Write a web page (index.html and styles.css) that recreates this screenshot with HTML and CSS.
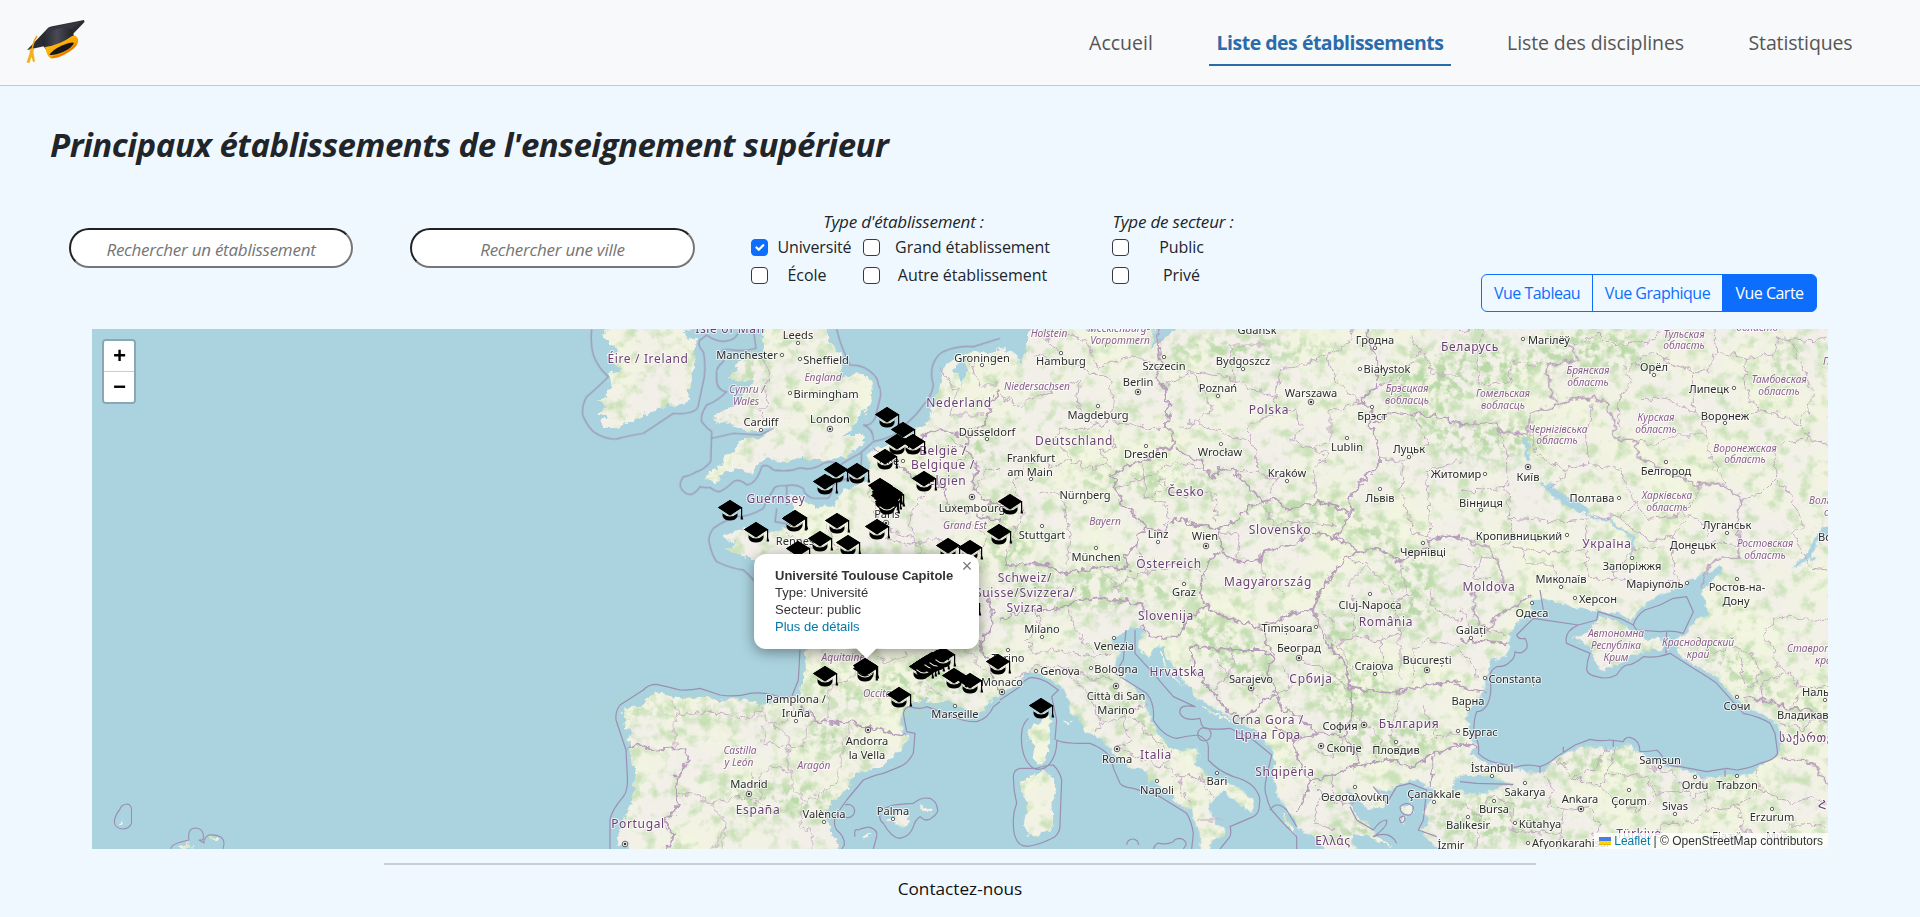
FILE: index.html
```html
<!DOCTYPE html>
<html lang="fr">
<head>
<meta charset="utf-8">
<title>Liste des établissements</title>
<link rel="stylesheet" href="styles.css">
</head>
<body>
<header class="topbar">
  <svg class="logo" viewBox="0 0 100 80" width="100" height="80" aria-label="Logo">
    <defs>
      <linearGradient id="cloth" x1="0" y1="0" x2="1" y2="0"><stop offset="0" stop-color="#22222a"/><stop offset=".45" stop-color="#4a4a55"/><stop offset="1" stop-color="#1d1d25"/></linearGradient>
      <linearGradient id="gold" x1="0" y1="0" x2="1" y2="1"><stop offset="0" stop-color="#ffc91f"/><stop offset=".55" stop-color="#f9a800"/><stop offset="1" stop-color="#e06c00"/></linearGradient>
    </defs>
    <path d="M17 45 L37 24 Q38 22 41 21.500 L74 15 L74.500 17 L63 29 L35 41Z" fill="#2b2b34"/>
    <path d="M38 23 L72 16 L60 25 L34 33Z" fill="#363640"/>
    <path d="M32 39 L35 31 Q46 20 62 24 L65 35 Q52 40 37 46Z" fill="url(#cloth)"/>
    <path d="M35 42 Q50 40 62 31 Q66 29 68 34 Q70 40 59 47 Q48 54 41 53.500 Q37 52 35 42Z" fill="url(#gold)"/>
    <path d="M39.500 50 Q42 45 52 40.500 Q62 36.500 64 38 Q62 43 53 47 Q45 50.500 39.500 50Z" fill="#17171b"/>
    <path d="M42 52.300 Q54 51 66 40" stroke="#e97900" stroke-width="1.500" fill="none"/>
    <path d="M27 31 Q23 37 22 45" stroke="#eaa51b" stroke-width="1.500" fill="none"/>
    <path d="M20 42 h4 l-.5 4 l1.500 9 l-2 .5 l-1.500-5 l-2 6 l-3-.5 l3-9Z" fill="#f2b223" transform="translate(0 1.500)"/>
  </svg>
  <nav class="menu">
    <a class="link l1">Accueil</a>
    <a class="link l2 active">Liste des établissements</a>
    <a class="link l3">Liste des disciplines</a>
    <a class="link l4">Statistiques</a>
  </nav>
</header>
<main>
  <h1 class="title">Principaux établissements de l'enseignement supérieur</h1>
  <section class="filters">
    <input class="search" type="text" placeholder="Rechercher un établissement">
    <input class="search" type="text" placeholder="Rechercher une ville">
    <div class="types">
      <p class="legend">Type d'établissement :</p>
      <div class="row">
        <span class="box checked"><svg viewBox="0 0 20 20" width="15" height="15"><path d="M6 10l3 3 6-6" fill="none" stroke="#fff" stroke-width="3" stroke-linecap="round" stroke-linejoin="round"/></svg></span><span class="name a wide">Université</span>
        <span class="box"></span><span class="name b">Grand établissement</span>
      </div>
      <div class="row">
        <span class="box"></span><span class="name a">École</span>
        <span class="box"></span><span class="name b">Autre établissement</span>
      </div>
    </div>
    <div class="sector">
      <p class="legend">Type de secteur :</p>
      <div class="row"><span class="box"></span><span class="name c">Public</span></div>
      <div class="row"><span class="box"></span><span class="name c">Privé</span></div>
    </div>
    <div class="views">
      <button class="view v1">Vue Tableau</button><button class="view v2">Vue Graphique</button><button class="view v3 on">Vue Carte</button>
    </div>
  </section>
  <section class="map">
    <svg class="tiles" viewBox="92 329 1736 520" width="1736" height="520">
      <defs>
        <filter id="terrain" filterUnits="userSpaceOnUse" x="92" y="329" width="1736" height="520" color-interpolation-filters="sRGB">
          <feTurbulence type="fractalNoise" baseFrequency=".14" numOctaves="3" seed="4" result="w"/>
          <feDisplacementMap in="SourceGraphic" in2="w" scale="9" xChannelSelector="R" yChannelSelector="G" result="land"/>
          <feTurbulence type="fractalNoise" baseFrequency=".07" numOctaves="6" seed="11"/>
          <feColorMatrix values="0 0 0 0 .8  0 0 0 0 .885  0 0 0 0 .73  3.500 0 0 0 -1.750" result="g"/>
          <feTurbulence type="fractalNoise" baseFrequency=".014" numOctaves="3" seed="7"/>
          <feColorMatrix values="0 0 0 0 .95  0 0 0 0 .96  0 0 0 0 .875  0 3 0 0 -1.100" result="y"/>
          <feMerge result="m"><feMergeNode in="land"/><feMergeNode in="y"/><feMergeNode in="g"/></feMerge>
          <feComposite in="m" in2="land" operator="in"/>
        </filter>
        <filter id="forest" filterUnits="userSpaceOnUse" x="92" y="329" width="1736" height="520" color-interpolation-filters="sRGB">
          <feGaussianBlur in="SourceAlpha" stdDeviation="9" result="b"/>
          <feTurbulence type="fractalNoise" baseFrequency=".11" numOctaves="5" seed="3"/>
          <feColorMatrix values="0 0 0 0 .73  0 0 0 0 .85  0 0 0 0 .66  5 0 0 0 -2.300"/>
          <feComposite in2="b" operator="in"/>
        </filter>
        <filter id="jag" filterUnits="userSpaceOnUse" x="92" y="329" width="1736" height="520">
          <feTurbulence type="fractalNoise" baseFrequency=".13" numOctaves="2" seed="8" result="n"/>
          <feDisplacementMap in="SourceGraphic" in2="n" scale="11" xChannelSelector="R" yChannelSelector="G"/>
        </filter>
        <filter id="shore" filterUnits="userSpaceOnUse" x="92" y="329" width="1736" height="520">
          <feTurbulence type="fractalNoise" baseFrequency=".14" numOctaves="3" seed="4" result="n"/>
          <feDisplacementMap in="SourceGraphic" in2="n" scale="8" xChannelSelector="R" yChannelSelector="G"/>
        </filter>
        <g id="cap"><path d="M-12 7.500L0 0l12 7.500-12 8z"/><path d="M-7.500 12.500q7.500 6 15 0v3.500q-1.500 4.500-7.500 4.500t-7.500-4.500z"/><path d="M-7.500 12.700q7.500 6.600 15 0" fill="none" stroke="#e9efdf" stroke-width="1.100"/><path d="M-12 7.500L0 0l12 7.500-12 7.800z"/><path d="M11 7h1.200v8.500l1 4h-2.600l.4-4z"/></g>
      </defs>

      <!-- mainland and islands -->
      <g class="land" filter="url(#terrain)">
        <g transform="translate(540 325) scale(.33333)">
          <path d="M188 -20L190 30 210 55 240 75 200 90 215 110 250 130 205 150 210 170 200 200 205 215 170 232 200 245 168 270 205 272 180 290 190 308 235 310 290 280 330 265 380 245 440 235 445 215 450 180 465 120 462 70 465 45 430 25 395 -20Z"/>
          <path d="M680 -20L668 40 668 90 685 110 640 95 600 100 585 120 590 140 560 160 600 170 640 165 625 190 600 230 580 245 520 265 540 275 515 275 525 290 560 290 580 300 620 320 660 318 700 300 670 335 650 345 600 345 590 370 560 390 555 410 520 435 488 465 510 460 525 475 560 440 610 430 635 450 660 405 720 410 765 400 850 410 925 390 975 355 970 330 910 330 950 300 960 280 995 230 998 180 985 155 950 148 910 160 895 155 905 130 905 90 870 60 860 -20Z"/>
          <path d="M1440 50L1330 90 1280 80 1240 100 1210 130 1195 200 1180 250 1160 300 1130 310 1090 340 1000 370 985 385 990 450 985 470 920 490 890 515 885 545 830 545 795 530 790 515 760 510 745 505 760 540 775 575 770 590 740 610 700 620 650 610 600 610 555 630 560 650 590 650 555 670 590 690 640 700 700 740 750 790 780 860 1440 860Z"/>
          <path d="M405 -5L450 -20 455 10 425 24Z"/>
        </g>
        <g transform="translate(540 590) scale(.33333)">
          <path d="M780 -50L800 175 792 210 795 240 785 290 782 315 740 325 700 335 660 345 600 325 540 330 480 320 430 325 395 322 370 310 345 306 315 325 310 345 280 350 250 355 245 375 260 390 258 410 275 430 265 450 270 480 275 500 288 550 280 590 270 640 250 700 240 720 232 765 245 765 265 755 270 820 890 820 895 760 875 740 870 700 855 690 870 650 905 610 930 590 925 575 950 550 1020 535 1085 480 1105 440 1085 420 1085 370 1110 345 1150 325 1190 340 1220 335 1260 350 1300 365 1330 360 1345 335 1440 300 1440 -50Z"/>
          <path d="M1035 692L1080 665 1112 680 1105 700 1085 714 1070 698ZM1138 645L1178 658 1170 668 1145 658ZM960 745L992 728 985 745 970 754Z"/>
        </g>
        <path d="M1000 300H1860V880H1000Z"/>
        <path d="M122 820l3 2-1 4-3-1zM178 845l10-2 6 4-12 3zM208 836h9l1 3h-8z"/>
      </g>

      <g filter="url(#forest)">
        <ellipse cx="1490" cy="440" rx="65" ry="22"/><ellipse cx="1470" cy="370" rx="70" ry="30"/><ellipse cx="1590" cy="350" rx="60" ry="24"/>
        <ellipse cx="1420" cy="390" rx="40" ry="40"/><ellipse cx="1080" cy="590" rx="80" ry="22"/><ellipse cx="1150" cy="590" rx="60" ry="14"/><ellipse cx="1290" cy="510" rx="60" ry="15"/>
        <ellipse cx="1370" cy="535" rx="55" ry="15" transform="rotate(40 1370 535)"/><ellipse cx="1410" cy="590" rx="30" ry="45"/><ellipse cx="1340" cy="630" rx="25" ry="20"/>
        <ellipse cx="1230" cy="650" rx="60" ry="24" transform="rotate(35 1230 650)"/><ellipse cx="1350" cy="690" rx="40" ry="30"/><ellipse cx="1390" cy="740" rx="60" ry="18"/>
        <ellipse cx="1120" cy="700" rx="60" ry="14" transform="rotate(40 1120 700)"/><ellipse cx="1740" cy="670" rx="55" ry="16" transform="rotate(35 1740 670)"/><ellipse cx="1810" cy="715" rx="40" ry="12"/>
        <ellipse cx="1600" cy="762" rx="70" ry="12"/><ellipse cx="1700" cy="790" rx="90" ry="9"/><ellipse cx="1490" cy="820" rx="60" ry="26"/><ellipse cx="1150" cy="480" rx="90" ry="12"/>
        <ellipse cx="1785" cy="360" rx="12" ry="40" transform="rotate(20 1785 360)"/><ellipse cx="1245" cy="350" rx="90" ry="14"/><ellipse cx="880" cy="700" rx="60" ry="12"/><ellipse cx="930" cy="680" rx="55" ry="18"/>
        <ellipse cx="828" cy="680" rx="20" ry="20"/><ellipse cx="700" cy="712" rx="90" ry="8"/><ellipse cx="830" cy="740" rx="30" ry="18"/><ellipse cx="1010" cy="540" rx="20" ry="50"/><ellipse cx="755" cy="370" rx="12" ry="26"/><ellipse cx="790" cy="345" rx="12" ry="14"/><ellipse cx="980" cy="450" rx="18" ry="24"/>
        <ellipse cx="1355" cy="830" rx="20" ry="20"/><ellipse cx="780" cy="800" rx="60" ry="20"/>
      </g>

      <!-- seas and lakes over the eastern mainland -->
      <g class="water" filter="url(#shore)">
        <path d="M1000 315h42l-15 20v15l-5 15-6-12-16-5zM1080 315h30l-8 14-14 5zM1155 315h32l-18 20-11 6-6 10zM953 370l10-14 5 14-7 16-4-12z"/>
        <g transform="translate(1000 590) scale(.33333)">
          <path d="M-20 330L40 290 75 255 100 245 125 250 160 280 190 290 205 330 210 370 235 385 240 400 255 430 290 435 320 465 350 500 390 530 440 540 445 580 470 580 500 600 520 630 550 650 575 660 585 690 600 730 600 820 -20 820Z"/>
          <path d="M625 820L635 750 670 740 668 710 630 680 628 650 650 615 670 605 690 620 715 635 735 660 755 665 762 635 740 610 700 585 640 570 580 520 600 490 590 475 520 480 490 450 450 390 440 340 400 290 350 240 345 210 360 190 340 170 340 145 380 120 410 110 435 115 425 135 410 150 425 185 445 205 470 160 490 170 500 200 530 240 560 290 600 330 690 380 760 420 820 480 825 520 815 560 830 610 870 670 900 720 950 745 990 820Z"/>
          <path d="M1035 600L1060 640 1060 665 1100 700 1130 740 1090 740 1050 730 1090 820 1400 820 1300 760 1255 720 1290 700 1270 670 1285 640 1310 605 1290 590 1250 570 1190 585 1170 605 1120 590 1150 620 1165 645 1110 655 1080 640 1060 610Z"/>
        </g>
        <g transform="translate(1460 590) scale(.33333)">
          <path d="M145 165L150 130 190 80 220 60 215 35 245 25 300 40 370 60 415 65 480 70 515 90 540 55 590 20 640 0 690 -30 780 -70 790 -62 740 -10 725 0 735 45 750 75 720 80 690 110 680 135 650 140 640 170 665 200 720 240 770 260 830 330 870 360 920 380 950 400 965 440 965 480 950 500 900 530 860 560 800 555 740 565 690 545 650 530 600 525 560 500 530 485 510 460 480 475 440 480 400 470 340 480 290 500 250 545 210 548 160 535 110 530 60 510 30 490 50 470 30 440 20 380 40 340 70 310 80 260 90 210 140 200Z"/>
          <path d="M-20 565L60 550 110 570 165 583 120 590 80 610 40 610 -20 600Z"/>
        </g>
        <g transform="translate(1460 325) scale(.33333)">
          <path d="M190 340h14l4 60-12 12zM240 478l34-2 46 40 60 28 8 26-60-18-42-32zM1060 645l30-40 24-8v30l-45 30-12 46-60 24 40-40z"/>
          <path d="M385 570L450 590 520 640 515 690" class="river"/>
        </g>
      </g>
      <g class="land" filter="url(#terrain)">
        <g transform="translate(1000 590) scale(.33333)">
          <path d="M85 420L110 400 140 375 150 390 148 430 150 460 140 500 125 525 95 505 100 470 85 450ZM60 575L95 560 130 540 150 550 160 580 168 610 158 640 160 690 155 725 125 725 105 745 80 735 75 700 80 660 75 620 60 600ZM1200 655L1235 642 1240 670 1210 675ZM1080 725L1140 745 1180 765 1140 760ZM1200 685h14v16h-14zM1090 650l60-4-20 12zM850 670l40 60-12-2-36-50zM600 345l60 30 80 30-50-12-80-34zM480 180l20 40 50 70-34-30-36-60zM190 392h24v8h-24z"/>
        </g>
        <g transform="translate(1460 590) scale(.33333)"><path d="M335 150L400 110 420 80 470 90 520 125 560 150 605 145 618 160 600 180 540 185 500 210 460 230 425 245 405 215 400 185 380 165Z"/></g>
      </g>

      <!-- regional borders -->
      <g class="region" filter="url(#jag)">
        <path transform="translate(540 325) scale(.33333)" d="M665 100L690 150 670 190 680 240 660 260 690 300M1200 130L1250 200 1230 270 1330 270M1290 100L1320 180 1370 180M980 480L1010 560 1000 600 1120 640 1110 560 1160 500 1150 450M860 600L900 680M740 620L820 680M1040 640L1100 660 1200 640 1240 680M1120 640L1140 700M1300 500L1340 440 1380 430M1230 340L1290 380 1240 420M1300 600L1340 640 1320 690"/>
        <path transform="translate(540 590) scale(.33333)" d="M395 325L410 370 400 420 410 470M410 380L470 370 560 370 600 390 660 370 670 350M660 370L690 400 730 400 770 340M670 410L670 460 740 470 790 470 800 410 830 390M690 400L750 440 740 500 750 540 760 590 800 640 860 600 890 580 900 520 930 400M660 640L660 550 700 530 750 545M660 640L620 600 640 550M415 620L460 610 510 640 600 620 660 640M510 640L560 700 545 777M790 640L780 700 820 740 810 777M860 390L870 290 940 260 980 210M1010 200L1040 220 1100 190M1110 210L1130 260 1200 320M1230 150L1280 180 1330 240M560 700L520 777M790 470L770 460"/>
        <path transform="translate(1000 325) scale(.33333)" d="M130 12L150 60 185 85M185 20L260 50 290 130 400 90 470 120M270 140L330 160 340 230 330 290 250 310 180 310 160 350 210 400 260 430 330 420M100 90L230 120 290 150M0 210L60 250 90 220 180 190 240 160M240 160L230 250 280 300M340 290L440 310 500 310M330 320L350 370 300 380 330 420M210 400L170 430 120 400 60 440 40 480 75 560 60 580 15 700M120 510L180 500 200 580 210 640 200 720M580 140L590 180 640 250 590 290 530 310M500 180L580 140 700 160 690 60 800 60M690 160L780 200 820 210 850 130 910 120 980 90 1050 50 1060 12M980 90L1010 170 1080 230M820 210L830 250 890 260 900 320 870 350 940 370 990 350 990 260 1080 230M590 290L680 330 740 350 750 300 830 260M740 350L770 370 770 440 700 440M940 370L990 390 940 430 950 520M770 440L830 460 900 440M830 460L810 500M350 490L430 460 420 410M440 520L430 460 520 410 600 430M440 520L500 490 550 510 640 500 650 590M470 470l30-12 0 20-25 4zM500 600L500 540 440 520M660 620L720 630 710 700M790 530L820 600 900 590 1010 600M900 590L890 640M1140 180L1200 160 1260 80 1230 30M1270 80L1300 150 1380 150M1140 400L1210 410 1280 360 1250 280M1210 410L1200 500 1240 620 1290 640M1290 640L1280 440 1380 410M1040 700L1100 720 1140 760 1180 810M1200 710L1220 810M1100 720L1040 780M780 680L790 760 850 810M410 660L440 740 350 780 300 730M440 740L530 720 600 740M350 780L360 810"/>
        <path transform="translate(1000 590) scale(.33333)" d="M80 150L110 190 180 180 270 200 340 190M110 60L120 120 80 150M200 50L230 130 280 190M40 270L110 230 190 230 290 270 340 260M200 250L280 330 300 400 370 380 440 340M300 400L290 440M370 380L390 450 350 470 400 490 440 530M400 380L450 440 500 470M390 490L480 530 500 520 520 480M500 530L540 560 550 610 570 640M520 560L600 560 640 620M590 690L660 690M960 120L1010 160 1060 140 1060 20M1010 160L1060 240M1060 140L1140 150 1150 260M1140 150L1200 130 1200 270M1200 130L1180 40 1250 0M1240 180L1290 150 1380 170M1240 180L1240 280M960 60L1010 100M1290 0L1300 60 1380 90M850 230L880 290 830 310M900 210L980 240 1040 290M1070 380L1140 440 1120 510M1200 330L1170 440 1230 500M1270 340L1310 440 1380 430M940 580L1000 640 1060 640M1000 550L1000 640M650 200L690 260 640 300M700 180L690 260 780 320M940 480L1000 500 1030 440M960 620L940 700 1000 720"/>
        <path transform="translate(1460 325) scale(.33333)" d="M0 20L70 10M70 10L50 120 60 180 150 170 160 110 250 120M410 30L340 60M410 20L450 60 580 50 600 12M580 80L620 110 700 140 740 140 770 80 765 12M500 120L510 170 470 240M580 80L510 130M540 220L620 220 700 260 700 140M770 80L860 100 940 90 950 40 1060 50 1104 30M860 100L850 180 900 260 960 270 1020 300 1060 210 1000 60M700 260L730 290 740 330 650 330 580 360 520 350M730 290L900 260M1020 300L1050 340 1104 360M740 330L750 400 800 480M1050 340L980 350 940 370 950 460 900 510 850 520M950 460L1000 520 1030 600 1000 630 1030 690 1060 730 1104 735M470 240L480 310M400 230L380 310 380 420 310 430 230 390 210 300M120 320L140 370 140 490 0 500M380 420L480 430 500 480 530 540 480 570 400 580 330 590 150 580 140 490M310 430L310 460 260 500M530 540L560 580 660 570 710 520 720 480M660 570L690 570 640 630 580 650 500 600 480 570M640 630L640 740 660 760 600 790 460 760 520 670 620 670M690 570L740 600 750 650 840 660M150 580L160 650 120 660M160 670L240 680 330 680 380 660 380 600M190 680L210 720 280 720 290 760M380 670L380 760 460 760M20 660L60 700 40 760 90 760M60 700L110 690M0 720L50 730"/>
        <path transform="translate(1460 590) scale(.33333)" d="M1104 90L990 80 940 90 910 130 940 180 950 230 1000 260 1020 290 1104 290M840 190L850 280 870 300 900 250 880 190 820 170 760 190M900 325L910 280 970 250M1030 300L1000 350M960 400L1030 420 1060 380 1104 400M0 180L40 220 50 270M40 60L60 110 140 140M0 50L30 110M240 545L280 600 260 650 310 660M290 500L330 560 400 540 440 480M330 560L420 590 440 550 560 560 590 610 540 660 470 640 420 590M440 550L470 470M590 610L670 600 640 550 560 530M670 600L700 620 740 600 720 560M740 600L740 660 700 700 610 700 590 740M740 660L830 650 900 600 890 540M900 600L1000 640 1060 620 1104 640M830 650L850 720 960 740 1000 700 1104 710M400 740L420 700 390 650 310 660 300 777M0 640L60 680 90 620 160 640 150 720M60 680L50 777M150 720L300 730"/>
      </g>
      <!-- national borders -->
      <g class="nation" filter="url(#jag)">
        <path transform="translate(540 325) scale(.33333)" d="M1380 190L1350 240 1340 290 1290 330 1280 370 1310 420 1300 470 1320 520 1400 550M1000 370L1060 400 1110 450 1200 480 1230 540 1380 590M1140 345L1180 315 1220 320 1290 340"/>
        <path transform="translate(540 590) scale(.33333)" d="M780 345L830 390 860 395 920 400 930 390 980 410 1060 430 1100 440M255 480L300 460 330 480 400 475 430 475 450 510 410 560 410 640 405 675 370 685 400 735 385 777M1340 0L1360 100 1320 170 1360 260 1380 300"/>
        <path transform="translate(1000 325) scale(.33333)" d="M470 -20L480 60 485 110 465 150 497 195 505 260 500 310 525 325 520 375 480 365 470 395 400 415 335 450 350 490 370 540 440 605 480 620 510 600 520 580 600 600 655 610 700 590 760 540 790 530 740 475 700 440 655 430 640 460 610 430 600 400 560 395 530 370M655 610L665 680 715 710 785 710 790 680 850 665 880 660 920 625 970 630 1010 640 1030 600 1055 575 1010 545 950 530 900 545 860 555 830 520 790 530M440 605L410 640 410 660 375 690 385 735 310 725 240 735 190 750 150 720 80 715 15 725 15 690M655 680L625 710 610 760 600 795M1055 575L1050 520 1090 460 1140 420 1140 380 1110 300 1115 250 1080 230 1130 180 1135 110 1110 60 1100 -20M1120 295L1160 265 1240 265 1330 280 1400 300M1010 640L1080 680 1130 670 1200 710 1280 670 1300 640 1380 630M1080 680L1030 700 990 760 955 810"/>
        <path transform="translate(1000 590) scale(.33333)" d="M600 0L610 40 680 85 760 110 830 95 880 70 940 60 955 0M425 110L450 140 540 140 560 90 620 45M575 170L700 180 790 180 820 210 800 250 830 310 780 340 740 380 690 370 640 310 580 240ZM780 110L820 200M940 60L980 160 1040 225 1045 290 1060 360 1030 440 950 430 900 380 850 360 830 320M1045 290L1100 300 1180 310 1260 290 1380 270M1030 440L1070 490 1070 530 1160 510 1240 530 1300 490 1400 460M1300 490L1300 550 1290 590M880 450L900 520 930 580 890 670M930 580L1000 550 1070 530M820 400L880 450 950 430M0 90L80 60 140 60 200 50 240 30 300 25 430 40 430 90"/>
        <path transform="translate(1460 325) scale(.33333)" d="M320 50L355 105 260 125 270 180 290 245 330 225 400 215 440 240 465 290 465 340 520 345 540 400 640 450 720 480 780 475 850 520 830 580 840 660 835 695 770 700 735 740 730 790M290 245L210 265 205 330 120 320 100 295 -20 300M-20 635L80 665 110 700 130 760 110 810"/>
        <path transform="translate(1460 590) scale(.33333)" d="M0 145L50 155 145 160M40 0L45 80 80 120 110 80 210 20M850 325L900 325 980 355 1050 360 1104 400M960 505L1030 510 1060 520 1104 580M-20 280L40 300 80 305M-20 460L50 470"/>
      </g>
      <!-- territorial waters -->
      <g class="maritime">
        <path transform="translate(540 325) scale(.33333)" d="M155 12Q150 55 160 90Q175 130 205 155Q170 190 140 215 125 240 128 270 140 300 160 320 195 345 230 342 275 330 310 325L400 265Q430 268 450 262 475 255 475 240L492 160Q498 120 490 80 470 60 480 45L500 30Q530 52 560 48 590 45 600 12M640 12L648 70Q610 80 580 75 550 70 545 78 555 95 550 110 525 130 530 150 525 195 560 200 530 230 500 240 480 270 485 290 500 310 515 320L512 410Q490 435 470 440 445 455 430 455 415 475 423 490 435 510 455 508 472 500 480 485 500 490 510 487 525 500 540 500 560 490 580 470 600 460 620 480 650 475 665 425 680 415 700 435 730 440 760 435 780 425 800 432 830 430 850 415 880 405 900 420 930 400 960 385L1000 350Q1030 345 1060 330L1100 295Q1130 270 1150 240 1175 215 1180 180 1170 150 1178 120 1190 90 1210 80 1250 62 1300 65L1380 40M890 12Q900 60 930 120 965 120 985 135 1015 155 1015 180 1025 195 1020 220L1005 280Q990 305 970 300 1000 310 1000 345M965 385L962 450Q910 460 880 480 870 525 860 520L820 520Q790 510 790 490 765 475 740 482 700 480 700 495 680 525 670 550 630 575 590 575 545 590 520 610 505 630 507 650 515 690 530 710 570 730 610 735 635 755 660 790M515 340L580 325 660 330 700 310M740 482V540M710 550L705 590 760 600"/>
        <path transform="translate(540 590) scale(.33333)" d="M780 180L775 270 755 320Q725 325 700 315 660 305 630 310 590 322 540 315L480 295Q450 302 420 300 380 290 350 283 325 283 310 300L240 345Q225 365 228 390L258 480 262 560Q265 600 250 620 215 660 210 690V777M1100 425L1125 430 1120 490Q1105 520 1080 530L1030 550Q1000 555 970 570L920 630 885 680Q880 705 890 720 915 740 913 765L905 777M1100 425L1090 370Q1095 350 1110 350 1140 360 1160 350L1240 380Q1270 395 1310 395 1345 385 1360 350L1380 335M1020 660Q1015 690 1030 700 1055 745 1080 745 1110 740 1120 710 1125 690 1140 680 1160 700 1180 680 1198 665 1192 655 1190 635 1170 625 1145 620 1120 640 1100 640 1060 645ZM945 740Q940 715 955 720 980 710 990 712 1015 720 1010 740L1000 777M905 670A20 20 0 1 0 915 645"/>
        <path transform="translate(1000 590) scale(.33333)" d="M0 330L60 290Q75 265 95 262 120 265 140 275L175 300 155 320 170 390 165 450M85 385Q65 405 65 430 62 460 70 490 80 520 100 535 130 545 150 520 172 490 170 450M60 535Q40 540 40 560 40 600 50 640 38 670 40 700 40 735 50 750 60 772 90 768 130 760 165 740 182 725 180 700L185 570Q180 545 160 525 140 525 110 535ZM170 450Q190 462 270 460 310 475 330 500 340 540 360 580 370 592 400 595L480 620 560 670Q575 695 580 730L575 777M378 120L370 210 345 250 440 310Q465 340 460 390 490 440 530 445 560 438 595 435 625 450 625 470V510Q650 540 700 560 740 570 760 590 785 620 778 640 780 670 760 680L690 710Q695 725 690 740L660 777M405 120V190L460 250 520 320 585 350Q535 340 540 370 550 395 600 385 605 412 615 415 650 420 690 415L760 450 815 495 800 560Q790 600 800 620 805 645 815 660L850 700 890 740V777M593 433a20 20 0 1 0 40 0a20 20 0 1 0-40 0M380 765a18 18 0 1 1 36 0M460 777Q470 755 480 760 500 765 520 755 525 745 540 745 560 750 558 765L550 777M810 660q20-30 50 0l30 50M1050 650L1070 690 1120 720Q1140 690 1160 690 1165 710 1120 740 1170 720 1190 760M1200 650q20-20 40 0q0 30-20 25t-20-25M1120 590L1160 640 1190 590 1230 580 1280 600 1270 690 1255 720 1310 740M1198 685q20-15 16 5q-10 20-16-5"/>
        <path transform="translate(1460 590) scale(.33333)" d="M220 85L170 135Q175 150 195 145 205 160 200 175 185 195 165 185 165 205 150 215 140 230 110 230 90 240 90 260 95 300 90 320 80 365 50 365 40 390 42 430 60 460 55 490 80 515 120 520L165 532Q200 520 240 530 270 520 290 500L345 465 390 448Q420 455 450 450L490 455Q495 440 510 442 540 450 540 485 570 485 590 480 610 495 610 515 630 530 660 530L740 545 800 535 830 540Q870 535 900 520 945 510 953 490L945 430 930 400Q900 380 850 370L770 280Q750 265 700 235L630 190Q590 205 550 200 520 225 500 225 485 230 470 255 440 270 410 260 385 255 380 240 380 215 390 190L320 160Q310 125 355 105ZM355 105L410 90 415 65 480 85 520 105Q530 75 555 60L600 45 640 25 680 20 700 65 670 130Q640 120 600 125L530 120 520 105M620 125L618 190M240 0L250 60M240 530V550M310 490V470M460 450V470M795 540V560M0 575L50 580 160 583"/>
        <path class="thin" d="M114.500 820q2-7 5-10q2-6 8-6q4 1 4 6v13q-2 6-9 6q-9-1-8-9zM171 849q-1-5 18-9q-2-12 7-12q9 1 7 12l-4 0 5 3q0-6 5-8q15-1 15 9l-1 5"/>
      </g>

      <g id="labels"></g>
      <g id="caps"></g>
    </svg>

    <div class="zoom"><span class="zbtn plus">+</span><span class="zbtn">−</span></div>

    <div class="popup">
      <div class="bubble"><b>Université Toulouse Capitole</b><br>Type: Université<br>Secteur: public<br><a>Plus de détails</a></div>
      <div class="tipbox"><div class="tip"></div></div>
      <span class="close">×</span>
    </div>

    <div class="credit"><svg width="12" height="8" viewBox="0 0 12 8"><path fill="#4c7be1" d="M0 0h12v4H0z"/><path fill="#ffd500" d="M0 4h12v3H0z"/><path fill="#e0bc00" d="M0 7h12v1H0z"/></svg> <a>Leaflet</a> | © OpenStreetMap contributors</div>
  </section>
</main>
<footer class="footer"><hr class="rule"><a class="contact">Contactez-nous</a></footer>
<script src="map.js"></script>
</body>
</html>
```

FILE: styles.css
```css
* { box-sizing: border-box; }
body { margin: 0; height: 917px; overflow: hidden; background: #f0f8ff; color: #212529; font-family: "Open Sans", "Noto Sans", sans-serif; font-size: 16px; }
.topbar { display: flex; justify-content: space-between; height: 86px; background: #f8f9fa; border-bottom: 1px solid #c8c9ca; }
.logo { margin: 5px 0 0 10px; }
.menu { display: flex; padding: 17px 59px 0 0; gap: 48px; }
.link { height: 49px; padding: 0; line-height: 51px; font-size: 19.500px; color: #555; white-space: nowrap; text-align: center; }
.link.active { color: #2a6cab; font-weight: 700; border-bottom: 2px solid #2a6cab; }
.l1 { width: 80px; }
.l2 { width: 242px; letter-spacing: -.5px; }
.l3 { width: 193px; letter-spacing: -.1px; }
.l4 { width: 121px; letter-spacing: -.15px; }
.title { margin: 0; padding: 35px 0 0 50px; height: 133px; font-size: 33px; line-height: 48px; font-style: italic; font-weight: 700; letter-spacing: -.48px; white-space: nowrap; }
.filters { display: flex; height: 110px; padding-left: 69px; }
.search { width: 285px; height: 40px; margin: 9px 56px 0 0; padding: 3px 10px 1px; border: 2px inset #767676; border-radius: 20px; background: #fff; text-align: center; font: italic 17px "Open Sans", sans-serif; }
.search:first-child { width: 284px; margin-right: 57px; }
.search::placeholder { color: #757575; letter-spacing: -.25px; }
.types { width: 305px; }
.sector { width: 122px; margin-left: 56px; }
.legend { margin: -9px 0 0; height: 29px; line-height: 24px; font-size: 17px; font-style: italic; text-align: center; letter-spacing: -.2px; white-space: nowrap; }
.row { display: flex; height: 27.500px; }
.box { flex: none; width: 17px; height: 17px; border: 1px solid #343a40; border-radius: 4px; background: #fff; }
.box.checked { border-color: #0d6efd; background: #0d6efd; }
.box svg { display: block; }
.name { line-height: 24px; margin-top: -4px; text-align: center; letter-spacing: -.05px; white-space: nowrap; }
.a { width: 78px; margin-right: 15px; }
.a.wide { width: 93px; margin-right: 0; letter-spacing: -.15px; }
.b { width: 185px; }
.row .box:nth-child(3) { margin-left: 0; }
.c { width: 112px; }
.views { display: flex; margin: 55px 0 0 248px; height: 38px; }
.view { border: 1px solid #0d6efd; margin: 0 0 0 -1px; padding: 0; background: none; color: #0d6efd; font: 16px "Open Sans", sans-serif; letter-spacing: -.5px; white-space: nowrap; }
.v1 { width: 112px; border-radius: 6px 0 0 6px; }
.v2 { width: 131px; }
.v3 { width: 95px; border-radius: 0 6px 6px 0; }
.view.on { background: #0d6efd; color: #fff; }
.types .row { width: 320px; padding-right: 0; }
.types .name.a { margin-right: 17px; }
.types .name.a.wide { margin-right: 2px; }

.map { position: relative; width: 1736px; height: 520px; margin-left: 92px; background: #aad3df; overflow: hidden; }
.tiles { display: block; }
.land { fill: #f2efe9; }
.water { fill: #aad3df; }
.river { fill: none; stroke: #aad3df; stroke-width: 8; }
.region { fill: none; stroke: #bfa5c1; stroke-width: 2.800; }
.nation { fill: none; stroke: #b79fbb; stroke-width: 5.500; stroke-linejoin: round; }
.maritime { fill: none; stroke: #9b8fb1; stroke-width: 3.600; stroke-linejoin: round; }
.maritime .thin { stroke-width: 1.100; }
.lab { font-family: "Noto Sans", "DejaVu Sans", sans-serif; font-size: 11.100px; fill: #2b2b2b; text-anchor: middle; paint-order: stroke; stroke: rgba(255, 255, 255, .7); stroke-width: 2px; stroke-linejoin: round; }
.lab.country { font-size: 12px; letter-spacing: .65px; fill: #6b3f74; }
.lab.state { font-size: 10.200px; font-style: italic; fill: #8a5d8c; }
.lab.left { text-anchor: start; }
.town { fill: #fff; stroke: #555; stroke-width: .9; }
.core { fill: #333; }

.zoom { position: absolute; left: 10px; top: 10px; width: 34px; border: 2px solid rgba(0, 0, 0, .2); background-clip: padding-box; border-radius: 4px; }
.zbtn { display: block; height: 30px; text-align: center; background: #fff; color: #000; font: bold 22px/33px "Liberation Mono", monospace; border-radius: 0 0 2px 2px; text-indent: 1px; }
.zbtn.plus { height: 31px; border-bottom: 1px solid #ccc; border-radius: 2px 2px 0 0; }
.popup { position: absolute; left: 662px; top: 225px; width: 225px; height: 115px; font: 13px/17px "Liberation Sans", Arial, sans-serif; color: #333; }
.bubble { height: 95px; padding: 13px 20px 0 21px; border-radius: 12px; background: #fff; box-shadow: 0 3px 14px rgba(0, 0, 0, .4); white-space: nowrap; }
.popup a, .credit a { color: #0078a8; }
.tipbox { position: absolute; left: 92px; top: 94px; width: 40px; height: 20px; overflow: hidden; }
.tip { width: 17px; height: 17px; margin: -10px auto 0; background: #fff; transform: rotate(45deg); box-shadow: 0 3px 14px rgba(0, 0, 0, .4); }
.close { position: absolute; right: 0; top: 0; width: 24px; height: 24px; text-align: center; font: 18px/24px "Liberation Sans", sans-serif; color: #757575; }
.credit { position: absolute; right: 0; bottom: 0; height: 16px; padding: 0 5px; font: 12px/16px "Liberation Sans", Arial, sans-serif; color: #333; background: rgba(255, 255, 255, .8); white-space: nowrap; }
.footer { display: flex; flex-direction: column; align-items: center; padding-top: 14px; }
.rule { width: 1152px; height: 2px; margin: 0; border: 0; background: #c8ced3; }
.contact { margin-top: 12px; font-size: 17.200px; line-height: 24px; color: #111; }
```

FILE: map.js
```js
const NS = 'http://www.w3.org/2000/svg';
const labels = document.getElementById('labels');
const caps = document.getElementById('caps');

function add(parent, tag, attrs, text) {
  const el = document.createElementNS(NS, tag);
  for (const key in attrs) el.setAttribute(key, attrs[key]);
  if (text) el.textContent = text;
  parent.appendChild(el);
}

// towns and capitals: x y
const towns = '798 343,782 355,800 359,790 393,761 430,982 365,987 439,903 461,796 721,955 706,893 819,824 822,1008 650,1061 353,1164 357,1243 369,1375 348,1360 369,1218 396,1098 406,1372 407,1347 438,1409 457,1146 446,1221 444,1031 479,1287 481,1085 502,1380 489,1042 526,1158 542,1096 548,1423 543,1184 584,1485 474,1042 637,1114 638,1036 671,1091 668,1157 781,1217 773,1316 627,1370 594,1375 674,1396 742,1355 787,1434 802,1468 817,1468 709,1458 731,1471 638,1523 339,1654 375,1734 388,1725 423,1666 462,1619 498,1481 510,1567 535,1727 533,1693 552,1632 558,1561 587,1687 583,1737 579,1532 603,1575 598,1485 678,1737 697,1825 700,1492 776,1660 767,1695 777,1737 776,1525 783,1629 790,1675 814,1494 801,1515 823,1772 809,1528 843';
const capitals = '830 429,886 523,972 497,868 730,749 794,625 844,1002 692,1138 392,1311 402,1206 546,1116 686,1117 749,1299 658,1251 688,1427 670,1364 725,1321 746,1528 467,1581 809';
for (const p of towns.split(',')) {
  const [x, y] = p.split(' ');
  add(labels, 'circle', { cx: x, cy: y, r: 1.7, class: 'town' });
}
for (const p of capitals.split(',')) {
  const [x, y] = p.split(' ');
  add(labels, 'circle', { cx: x, cy: y, r: 2.8, class: 'town' });
  add(labels, 'circle', { cx: x, cy: y, r: 1.3, class: 'core' });
}

const names = {
  city: '798 339 Leeds|747 359 Manchester|826 364 Sheffield|826 398 Birmingham|761 426 Cardiff|830 423 London|982 362 Groningen|987 436 Düsseldorf|887 518 Paris|795 545 Rennes|972 512 Luxembourg|889 465 Lille|796 703 Pamplona /|796 717 Iruña|867 745 Andorra|867 759 la Vella|955 718 Marseille|749 788 Madrid|893 815 Palma|824 818 València|1008 662 Torino|1002 686 Monaco|1061 365 Hamburg|1164 370 Szczecin|1243 365 Bydgoszcz|1257 334 Gdańsk|1375 344 Гродна|1387 373 Białystok|1138 386 Berlin|1218 392 Poznań|1311 397 Warszawa|1098 419 Magdeburg|1372 420 Брэст|1347 451 Lublin|1409 453 Луцьк|1146 458 Dresden|1220 456 Wrocław|1031 462 Frankfurt|1030 476 am Main|1287 477 Kraków|1085 499 Nürnberg|1380 502 Львів|1042 539 Stuttgart|1158 538 Linz|1205 540 Wien|1096 561 München|1423 556 Чернівці|1184 596 Graz|1456 478 Житомир|1042 633 Milano|1114 650 Venezia|1060 675 Genova|1116 673 Bologna|1116 700 Città di San|1116 714 Marino|1117 763 Roma|1157 794 Napoli|1217 785 Bari|1287 632 Timișoara|1299 652 Београд|1370 609 Cluj-Napoca|1251 683 Sarajevo|1374 670 Craiova|1427 664 București|1340 730 София|1344 752 Скопје|1396 754 Пловдив|1355 801 Θεσσαλονίκη|1434 798 Çanakkale|1468 829 Balıkesir|1451 849 İzmir|1468 705 Варна|1471 634 Galați|1549 344 Магілёў|1654 371 Орёл|1709 393 Липецк|1725 420 Воронеж|1666 475 Белгород|1528 481 Київ|1592 502 Полтава|1481 507 Вінниця|1519 540 Кропивницький|1727 529 Луганськ|1693 549 Донецьк|1632 570 Запоріжжя|1561 583 Миколаїв|1655 588 Маріуполь|1737 591 Ростов-на-|1736 605 Дону|1532 617 Одеса|1598 603 Херсон|1515 683 Constanța|1480 736 Бургас|1737 710 Сочи|1492 772 İstanbul|1660 764 Samsun|1695 789 Ordu|1737 789 Trabzon|1525 796 Sakarya|1580 803 Ankara|1629 805 Çorum|1675 810 Sivas|1494 813 Bursa|1540 828 Kütahya|1772 821 Erzurum|1727 840 Elazığ|1777 840 Muş',
  'city left': '1818 541 Волгодонск|1802 696 Нальчик|1777 719 Владикавказ|1532 847 Afyonkarahisar',
  country: '648 363 Éire / Ireland|730 333 Isle of Man|959 407 Nederland|943 455 België /|943 469 Belgique /|943 485 Belgien|776 503 Guernsey|758 814 España|638 828 Portugal|1269 414 Polska|1074 445 Deutschland|1186 496 Česko|1280 534 Slovensko|1169 568 Österreich|1268 586 Magyarország|1025 582 Schweiz/|1025 597 Suisse/Svizzera/|1025 612 Svizra|1470 351 Беларусь|1166 620 Slovenija|1177 676 Hrvatska|1311 683 Србија|1386 626 România|1268 724 Crna Gora /|1268 739 Црна Гора|1409 728 България|1156 759 Italia|1285 776 Shqipëria|1333 845 Ελλάς|1607 548 Україна|1489 591 Moldova|1639 838 Türkiye',
  'country left': '1779 742 საქართველო|1818 809 Հայաստան',
  state: '823 381 England|747 393 Cymru /|746 405 Wales|965 529 Grand Est|740 754 Castilla|739 766 y León|814 769 Aragón|843 661 Aquitaine|884 697 Occitanie|1049 337 Holstein|1119 332 Mecklenburg-|1120 344 Vorpommern|1037 390 Niedersachsen|1105 525 Bayern|1407 392 Брэсцкая|1407 404 вобласць|1684 338 Тульская|1684 349 область|1757 331 область|1588 374 Брянская|1588 386 область|1779 383 Тамбовская|1779 395 область|1503 397 Гомельская|1503 409 вобласць|1656 421 Курская|1656 433 область|1558 433 Чернігівська|1557 444 область|1745 452 Воронежская|1745 463 область|1667 499 Харківська|1667 511 область|1765 547 Ростовская|1765 559 область|1616 637 Автономна|1616 649 Республіка|1616 661 Крим|1698 646 Краснодарский|1698 658 край',
  'state left': '1809 504 Волгоградская|1824 516 область|1823 365 Пензенская|1787 652 Ставропольский|1815 664 край'
};
for (const kind in names) {
  for (const item of names[kind].split('|')) {
    const [, x, y, text] = item.match(/^(\d+) (\d+) (.+)$/);
    add(labels, 'text', { x, y, class: 'lab ' + kind }, text);
  }
}

// universities: x y of the cap's top corner
const pins = '887 407,903 422,897 434,913 434,885 449,836 462,857 463,825 474,924 471,730 500,795 510,794 511,837 513,756 522,877 519,798 541,820 531,848 535,948 538,970 540,880 478,883 481,887 483,890 485,885 487,889 490,884 484,892 487,886 491,883 488,887 494,1010 494,999 524,825 666,865 658,866 659,865 661,899 687,921 659,927 655,924 657,932 652,937 650,943 647,954 668,970 673,998 654,1041 698,968 596';
for (const p of pins.split(',')) {
  const [x, y] = p.split(' ');
  add(caps, 'use', { href: '#cap', x, y });
}
```
